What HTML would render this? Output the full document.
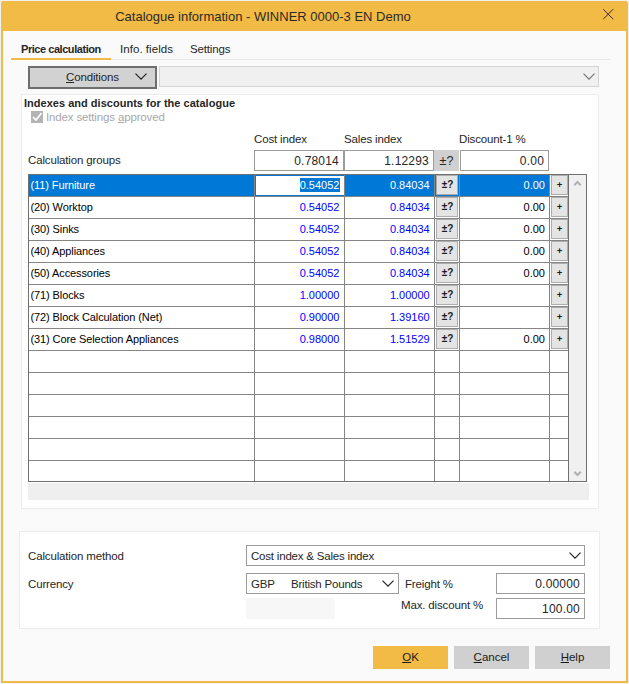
<!DOCTYPE html>
<html><head><meta charset="utf-8">
<style>
*{box-sizing:border-box;margin:0;padding:0}
html,body{width:629px;height:684px;overflow:hidden;background:#f0f1f5}
body{font-family:"Liberation Sans",sans-serif;font-size:12px;color:#1a1a1a;position:relative}
.abs{position:absolute}
#win{position:absolute;left:1px;top:1px;width:627px;height:682px;background:#f2bb45;border-radius:2px 2px 0 0}
#body{position:absolute;left:3px;top:31px;width:623px;height:650px;background:#fafafa}
.t{position:absolute;white-space:nowrap;line-height:14px;font-size:11.5px;letter-spacing:-0.15px;color:#262626}
.panel{position:absolute;background:#fff;border:1px solid #ececec}
.inp{position:absolute;background:#fff;border:1px solid #9c9c9c;text-align:right;font-size:12px;letter-spacing:0.2px;line-height:21px;padding-right:4px;color:#262626}
.cmb{font-size:11.5px;letter-spacing:-0.2px;text-align:left;padding-left:4px}
.btn{position:absolute;text-align:center;font-size:11.5px;line-height:22px;height:23px}
.grid{position:absolute;left:28px;top:174px;width:541px;height:308px;border:1px solid #707070;background:#fff}
.hl{position:absolute;left:0;width:539px;height:1px;background:#858585}
.vl{position:absolute;top:0;height:306px;width:1px;background:#858585}
.row{position:absolute;left:0;width:539px;height:21px;font-size:11px;line-height:21px}
.row span{position:absolute;top:0;white-space:nowrap}
.c1{left:1.5px;color:#000;letter-spacing:-0.1px}
.c2{right:228.6px;color:#0000ff}
.c3{right:138.3px;color:#0000ff}
.c5{right:23px;color:#000}
.pm{position:absolute;left:407px;top:1px;width:22px;height:20px;background:#e4e4e4;border:1px solid #adadad;font-size:10px;font-weight:bold;line-height:18px;text-align:center;color:#1a1a1a;padding-left:1px}
.pl{position:absolute;left:522px;top:1px;width:17px;height:20px;background:#e4e4e4;border:1px solid #adadad;font-size:9.5px;font-weight:bold;line-height:18px;text-align:center;color:#1a1a1a}
</style></head><body>
<div id="win"></div>
<div id="body"></div>
<div class="t" style="left:0;width:526px;top:9px;text-align:center;font-size:13px;letter-spacing:0;line-height:15px;color:#2c2a26">Catalogue information - WINNER 0000-3 EN Demo</div>
<svg class="abs" style="left:602px;top:8px" width="13" height="13" viewBox="0 0 13 13"><path d="M1.2 1.2L11.2 11.2M11.2 1.2L1.2 11.2" stroke="#3a2a20" stroke-width="1" fill="none"/></svg>

<!-- tabs -->
<div class="abs" style="left:11px;top:59px;width:599px;height:1px;background:#e6e6e6"></div>
<div class="abs" style="left:11px;top:58px;width:100px;height:2px;background:#f2bb45"></div>
<div class="t" style="left:21px;top:42px;font-weight:bold;font-size:11px;letter-spacing:-0.45px">Price calculation</div>
<div class="t" style="left:120px;top:42px;letter-spacing:0.05px">Info. fields</div>
<div class="t" style="left:190px;top:42px">Settings</div>

<!-- conditions -->
<div class="abs" style="left:28px;top:66px;width:129px;height:23px;background:#d2d2d2;border:2px solid #6e6e6e"></div>
<div class="t" style="left:66px;top:70px"><u>C</u>onditions</div>
<svg class="abs" style="left:133px;top:72px" width="16" height="10" viewBox="0 0 16 10"><path d="M2.5 1.7L8 7.2L13.5 1.7" stroke="#222" stroke-width="1.2" fill="none"/></svg>
<div class="abs" style="left:159px;top:66px;width:440px;height:21px;background:#f0f0f0;border:1px solid #d4d4d4"></div>
<svg class="abs" style="left:581px;top:72px" width="16" height="10" viewBox="0 0 16 10"><path d="M2.5 1.7L8 7.2L13.5 1.7" stroke="#707070" stroke-width="1.1" fill="none"/></svg>

<!-- panel 1 -->
<div class="panel" style="left:21px;top:94px;width:578px;height:415px"></div>
<div class="t" style="left:24px;top:96px;font-weight:bold;font-size:11px;letter-spacing:0.02px">Indexes and discounts for the catalogue</div>
<div class="abs" style="left:31px;top:111px;width:12px;height:12px;background:#b4b4b4"></div>
<svg class="abs" style="left:31px;top:111px" width="12" height="12" viewBox="0 0 12 12"><path d="M2 6L5 9L10.5 2" stroke="#fff" stroke-width="1.6" fill="none"/></svg>
<div class="t" style="left:46px;top:110px;color:#a8a8a8">Index settings <u>a</u>pproved</div>

<div class="t" style="left:254px;top:132px">Cost index</div>
<div class="t" style="left:344px;top:132px">Sales index</div>
<div class="t" style="left:459px;top:132px">Discount-1 %</div>
<div class="t" style="left:28px;top:153px">Calculation groups</div>
<div class="inp" style="left:254px;top:150px;width:90px;height:21px">0.78014</div>
<div class="inp" style="left:344px;top:150px;width:90px;height:21px">1.12293</div>
<div class="abs" style="left:434px;top:150px;width:25px;height:21px;background:#d0d0d0;text-align:center;font-size:12.5px;line-height:22px;color:#262626">±?</div>
<div class="inp" style="left:460px;top:150px;width:89px;height:21px">0.00</div>

<!-- grid -->
<div class="grid" id="grid">
<div class="abs" style="left:0;top:0;width:521px;height:21px;background:#0078d7"></div>
<div class="abs" style="left:227px;top:1px;width:88px;height:19px;background:#fff"></div>
<div class="abs" style="left:271px;top:3px;width:40px;height:14px;background:#0078d7"></div>
<div class="hl" style="top:21px"></div>
<div class="hl" style="top:43px"></div>
<div class="hl" style="top:65px"></div>
<div class="hl" style="top:87px"></div>
<div class="hl" style="top:109px"></div>
<div class="hl" style="top:131px"></div>
<div class="hl" style="top:153px"></div>
<div class="hl" style="top:175px"></div>
<div class="hl" style="top:197px"></div>
<div class="hl" style="top:219px"></div>
<div class="hl" style="top:241px"></div>
<div class="hl" style="top:263px"></div>
<div class="hl" style="top:285px"></div>
<div class="vl" style="left:225px"></div>
<div class="vl" style="left:315px"></div>
<div class="vl" style="left:405px"></div>
<div class="vl" style="left:430px"></div>
<div class="vl" style="left:520px"></div>
<div class="row" style="top:0px"><span class="c1" style="color:#fff">(11) Furniture</span><span class="c2" style="color:#fff">0.54052</span><span class="c3" style="color:#fff">0.84034</span><span class="pm" style="top:0">±?</span><span class="c5" style="color:#fff">0.00</span><span class="pl" style="top:0">+</span></div>
<div class="row" style="top:22px"><span class="c1">(20) Worktop</span><span class="c2">0.54052</span><span class="c3">0.84034</span><span class="pm" style="top:0">±?</span><span class="c5">0.00</span><span class="pl" style="top:0">+</span></div>
<div class="row" style="top:44px"><span class="c1">(30) Sinks</span><span class="c2">0.54052</span><span class="c3">0.84034</span><span class="pm" style="top:0">±?</span><span class="c5">0.00</span><span class="pl" style="top:0">+</span></div>
<div class="row" style="top:66px"><span class="c1">(40) Appliances</span><span class="c2">0.54052</span><span class="c3">0.84034</span><span class="pm" style="top:0">±?</span><span class="c5">0.00</span><span class="pl" style="top:0">+</span></div>
<div class="row" style="top:88px"><span class="c1">(50) Accessories</span><span class="c2">0.54052</span><span class="c3">0.84034</span><span class="pm" style="top:0">±?</span><span class="c5">0.00</span><span class="pl" style="top:0">+</span></div>
<div class="row" style="top:110px"><span class="c1">(71) Blocks</span><span class="c2">1.00000</span><span class="c3">1.00000</span><span class="pm" style="top:0">±?</span><span class="c5"></span><span class="pl" style="top:0">+</span></div>
<div class="row" style="top:132px"><span class="c1">(72) Block Calculation (Net)</span><span class="c2">0.90000</span><span class="c3">1.39160</span><span class="pm" style="top:0">±?</span><span class="c5"></span><span class="pl" style="top:0">+</span></div>
<div class="row" style="top:154px"><span class="c1">(31) Core Selection Appliances</span><span class="c2">0.98000</span><span class="c3">1.51529</span><span class="pm" style="top:0">±?</span><span class="c5">0.00</span><span class="pl" style="top:0">+</span></div>
</div><!--endgrid-->
<!-- scrollbar -->
<div class="abs" style="left:569px;top:174px;width:18px;height:308px;background:#f0f0f0;border:1px solid #707070;border-left:0"></div>
<svg class="abs" style="left:573px;top:180px" width="10" height="7" viewBox="0 0 10 7"><path d="M1.3 5.2L4.5 2L7.7 5.2" stroke="#b0b0b0" stroke-width="2" fill="none"/></svg>
<svg class="abs" style="left:573px;top:470px" width="10" height="7" viewBox="0 0 10 7"><path d="M1.3 1.8L4.5 5L7.7 1.8" stroke="#b0b0b0" stroke-width="2" fill="none"/></svg>
<div class="abs" style="left:28px;top:483px;width:561px;height:17px;background:#efefef"></div>

<!-- panel 2 -->
<div class="panel" style="left:19px;top:531px;width:581px;height:98px"></div>
<div class="t" style="left:28px;top:549px">Calculation method</div>
<div class="inp cmb" style="left:246px;top:545px;width:339px;height:21px;line-height:20px">Cost index &amp; Sales index</div>
<svg class="abs" style="left:567px;top:551px" width="16" height="10" viewBox="0 0 16 10"><path d="M2.5 1.7L8 7.2L13.5 1.7" stroke="#222" stroke-width="1.2" fill="none"/></svg>
<div class="t" style="left:28px;top:577px">Currency</div>
<div class="inp cmb" style="left:246px;top:573px;width:153px;height:21px;line-height:20px">GBP<span style="position:absolute;left:44px">British Pounds</span></div>
<svg class="abs" style="left:380px;top:579px" width="16" height="10" viewBox="0 0 16 10"><path d="M2.5 1.7L8 7.2L13.5 1.7" stroke="#222" stroke-width="1.2" fill="none"/></svg>
<div class="t" style="left:405px;top:577px">Freight %</div>
<div class="inp" style="left:496px;top:573px;width:89px;height:21px;line-height:21px">0.00000</div>
<div class="abs" style="left:246px;top:598px;width:89px;height:21px;background:#f7f7f7"></div>
<div class="t" style="left:401px;top:598px">Max. discount %</div>
<div class="inp" style="left:496px;top:598px;width:89px;height:21px;line-height:21px">100.00</div>

<!-- buttons -->
<div class="btn" style="left:373px;top:646px;width:75px;background:#f2bb45"><u>O</u>K</div>
<div class="btn" style="left:454px;top:646px;width:75px;background:#d0d0d0"><u>C</u>ancel</div>
<div class="btn" style="left:535px;top:646px;width:75px;background:#d0d0d0"><u>H</u>elp</div>
</body></html>
